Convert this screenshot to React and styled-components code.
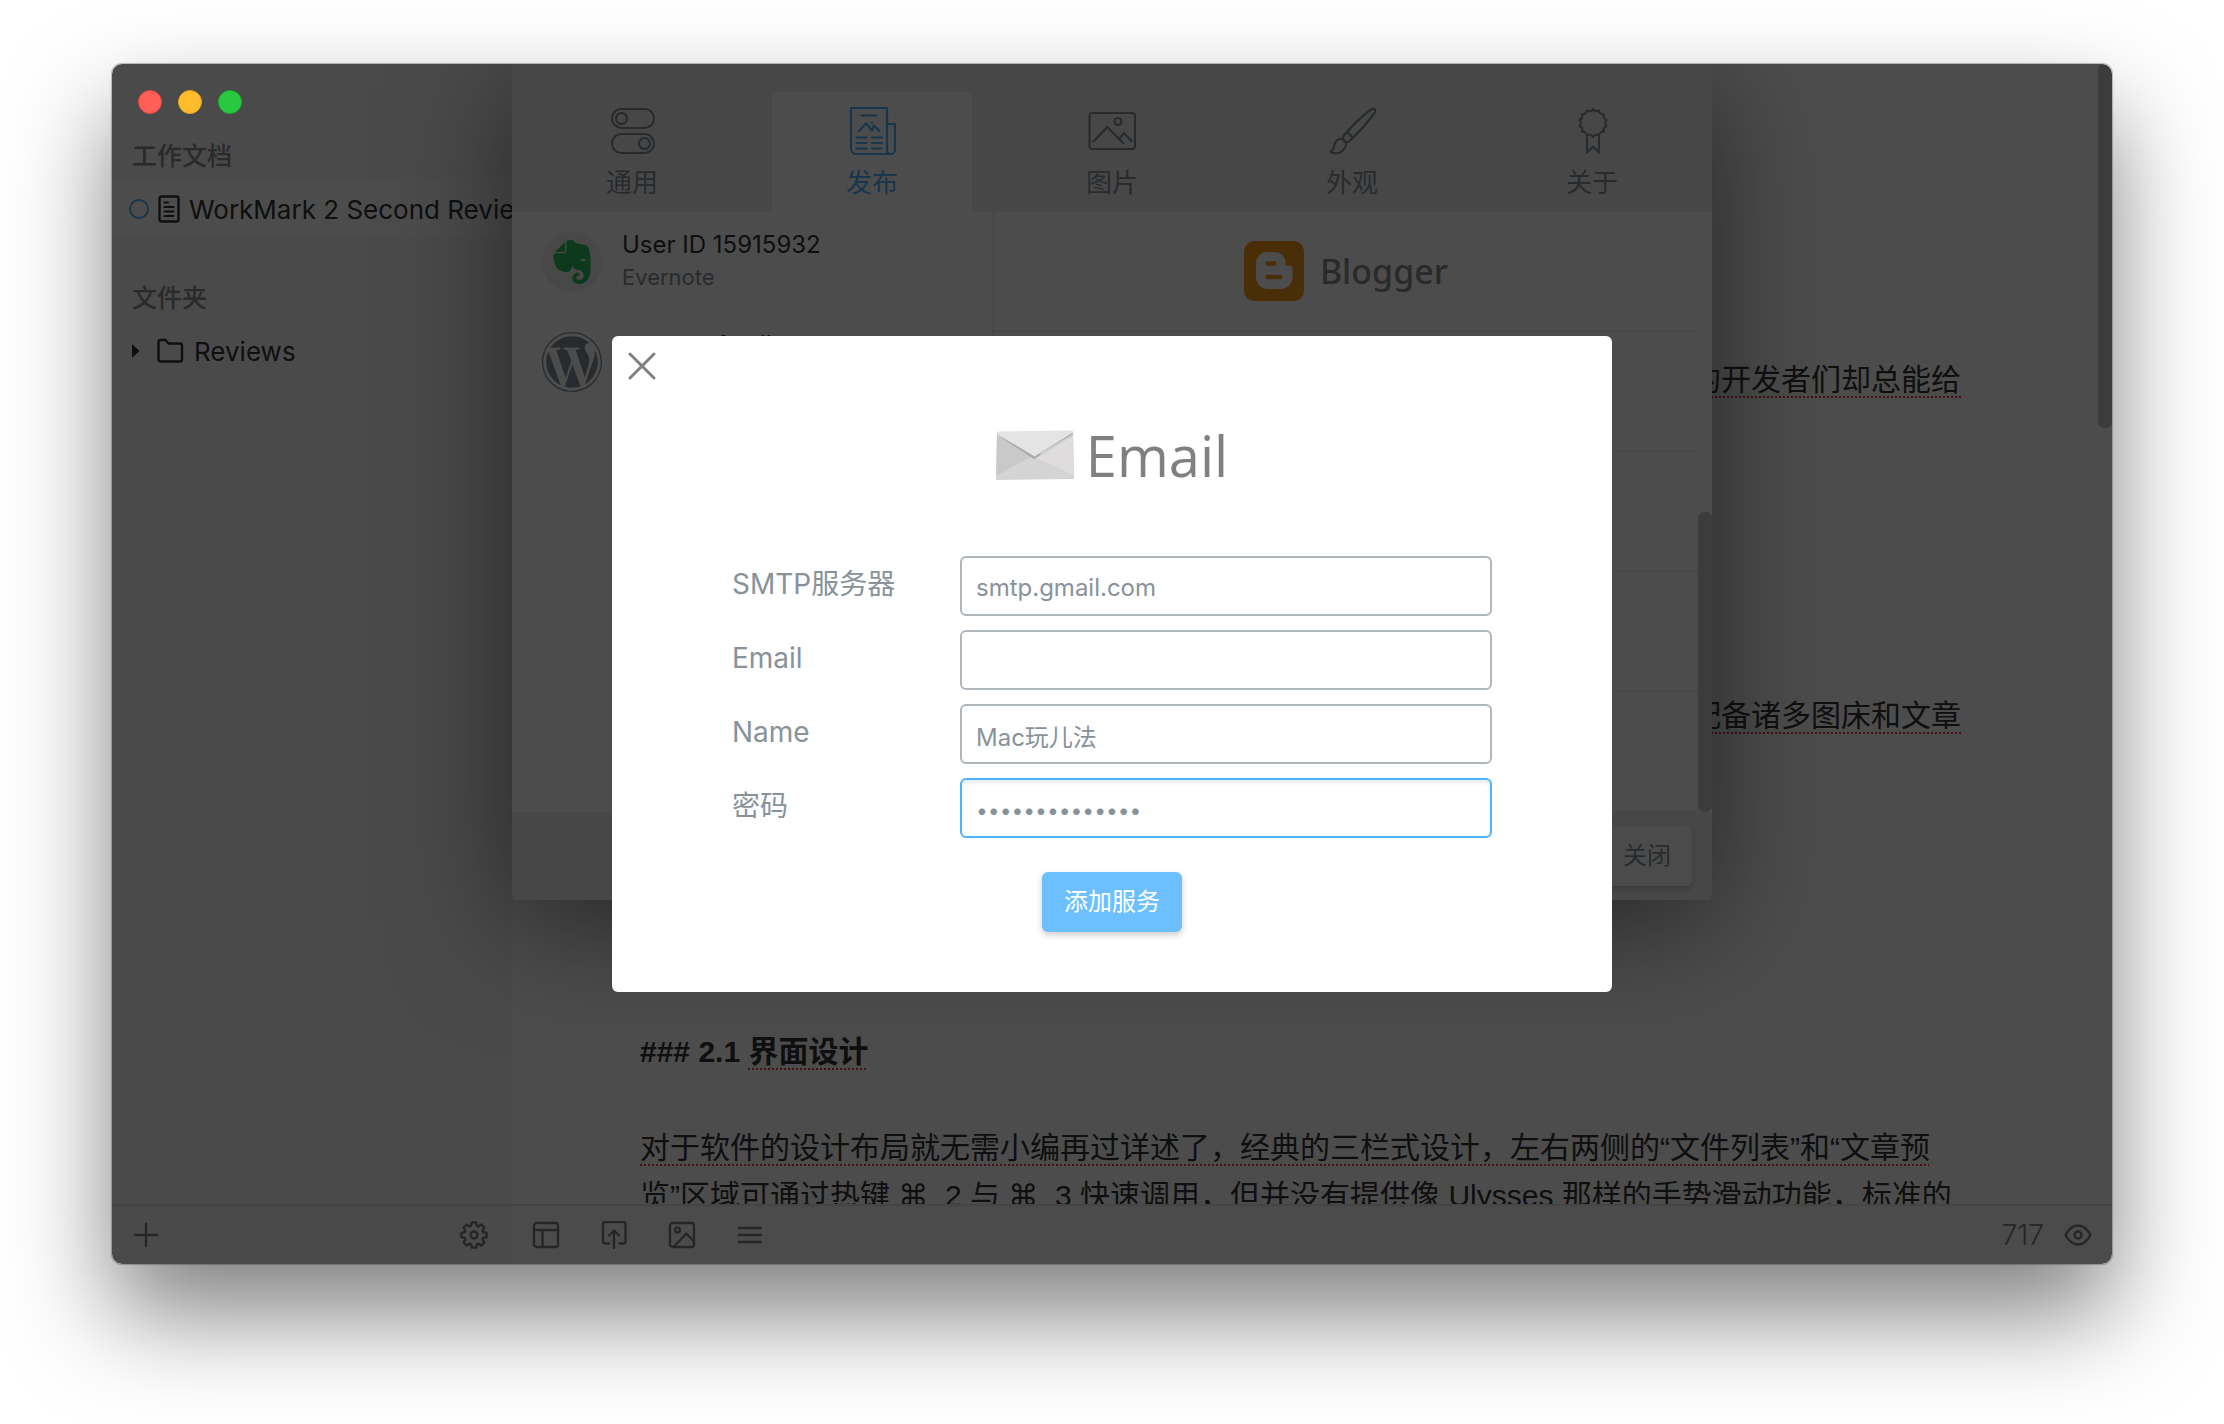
import React from "react";
import styled, { createGlobalStyle, css } from "styled-components";
import { SiEvernote } from "react-icons/si";
import { FaWordpress } from "react-icons/fa";

const sans = `Inter, "Noto Sans CJK SC", sans-serif`;
const prose = `"Liberation Sans", "Noto Sans CJK SC", "DejaVu Sans", sans-serif`;
const brand = `"Open Sans", "Noto Sans", sans-serif`;

const GlobalStyle = createGlobalStyle`
  *, *::before, *::after { box-sizing: border-box; }
  body { margin: 0; background: #fff; font-family: ${sans}; color: #333; }
  button, input { font: inherit; margin: 0; }
  h1, h2, h3, p, ul { margin: 0; padding: 0; }
  ul { list-style: none; }
  svg { display: block; flex: none; }
`;

const Desktop = styled.div`
  display: flex;
  min-height: 100vh;
  padding: 64px 112px 160px;
`;

const Window = styled.div`
  position: relative;
  flex: 1;
  display: grid;
  grid-template-columns: 400px minmax(0, 1fr);
  grid-template-rows: minmax(0, 1fr) 60px;
  border-radius: 10px;
  overflow: hidden;
  background: #fff;
`;

const WindowFrame = styled.div`
  flex: 1;
  display: flex;
  border-radius: 10px;
  box-shadow: 0 0 1px 1px rgba(0, 0, 0, 0.25), 0 50px 100px rgba(0, 0, 0, 0.5);
`;

const TrafficLights = styled.div`
  position: absolute;
  top: 26px;
  left: 26px;
  z-index: 4;
  display: flex;
  gap: 16px;
`;

const Light = styled.button`
  width: 24px;
  height: 24px;
  padding: 0;
  border: 1px solid ${(p) => p.$rim};
  border-radius: 50%;
  background: ${(p) => p.$fill};
`;

/* ---------- sidebar ---------- */

const Sidebar = styled.aside`
  display: flex;
  flex-direction: column;
  gap: 38px;
  padding-top: 70px;
  background: #f7f7f7;
`;

const SideHeading = styled.h2`
  padding-left: 20px;
  font-size: 25px;
  font-weight: 500;
  line-height: 44px;
  color: #8c8c8c;
`;

const SideRow = styled.div`
  display: flex;
  align-items: center;
  gap: ${(p) => p.$gap}px;
  height: 60px;
  padding: 2px 0 0 ${(p) => p.$indent}px;
  overflow: hidden;
  white-space: nowrap;
  font-size: 26px;
  color: #333;
  background: ${(p) => (p.$selected ? "#fdfdfd" : "transparent")};
`;

/* ---------- editor ---------- */

const Editor = styled.main`
  display: grid;
  grid-template-columns: minmax(0, 1fr) 14px;
  overflow: hidden;
`;

const Manuscript = styled.article`
  display: flex;
  flex-direction: column;
  gap: 288px;
  height: 0;
  padding: 292px 137px 0 128px;
  font-family: ${prose};
  font-size: 30px;
  line-height: 48px;
  white-space: nowrap;
`;

const Tail = styled.p`
  text-align: right;
`;

const Section = styled.section`
  display: flex;
  flex-direction: column;
  gap: 48px;
`;

const SectionTitle = styled.h3`
  font-size: 30px;
  font-weight: 700;
`;

const Line = styled.span`
  display: block;
`;

const Key = styled.kbd`
  font-family: "DejaVu Sans", sans-serif;
  font-size: 30px;
  line-height: 1;
`;

const Misspelt = styled.span`
  text-decoration: underline dotted #e03a3a 2px;
  text-underline-offset: 6px;
  text-decoration-skip-ink: none;
`;

const Thumb = styled.div`
  width: 14px;
  height: ${(p) => p.$length}px;
  border-radius: 6px;
  background: #c8c8c8;
`;

/* ---------- status bars ---------- */

const Bar = styled.footer`
  display: flex;
  align-items: center;
  justify-content: space-between;
  padding: 0 ${(p) => p.$end}px 0 20px;
  border-top: 2px solid #e6e6e6;
  background: ${(p) => p.$tone};
  color: #808080;
  font-size: 28px;
  font-weight: 300;
`;

const BarGroup = styled.div`
  display: flex;
  align-items: center;
  gap: ${(p) => p.$gap}px;
`;

const IconButton = styled.button`
  display: flex;
  padding: 0;
  border: 0;
  background: none;
  color: inherit;
`;

/* ---------- preferences sheet ---------- */

const SheetLayer = styled.div`
  position: absolute;
  inset: 0;
  z-index: 1;
  display: flex;
  justify-content: center;
  align-items: flex-start;
`;

const Sheet = styled.section`
  width: 1200px;
  border-radius: 0 0 6px 6px;
  background: #fff;
  box-shadow: 0 24px 120px rgba(20, 28, 36, 0.55);
`;

const TabBar = styled.nav`
  display: flex;
  justify-content: space-around;
  padding-top: 28px;
  background: #efefef;
`;

const Tab = styled.button`
  display: flex;
  flex-direction: column;
  align-items: center;
  gap: 10px;
  width: 200px;
  height: 120px;
  padding: 15px 0 0;
  border: 0;
  border-radius: 6px 6px 0 0;
  font-size: 26px;
  line-height: 36px;
  color: #87929b;
  background: transparent;
  ${(p) =>
    p.$active &&
    css`
      color: #4db3ff;
      background: #fff;
    `}
`;

const SheetBody = styled.div`
  display: grid;
  grid-template-columns: 480px minmax(0, 1fr) 14px;
  height: 600px;
`;

const AccountRow = styled.li`
  display: flex;
  align-items: center;
  gap: 20px;
  height: 100px;
  padding: 0 30px;
`;

const Avatar = styled.span`
  display: flex;
  align-items: center;
  justify-content: center;
  width: 60px;
  height: 60px;
  border-radius: 50%;
  background: ${(p) => p.$fill};
  color: ${(p) => p.$ink};
`;

const AccountText = styled.div`
  display: flex;
  flex-direction: column;
  padding-bottom: 3px;
  line-height: 33px;
`;

const AccountName = styled.span`
  font-size: 24px;
  color: #333;
`;

const AccountKind = styled.span`
  font-size: 22px;
  color: #87929b;
`;

const ServiceList = styled.ul`
  border-left: 2px solid #f2f2f2;
`;

const Service = styled.li`
  display: flex;
  align-items: center;
  justify-content: center;
  gap: 16px;
  height: 120px;
  border-bottom: 2px solid #f0f0f0;
  font-family: "Noto Sans", "Open Sans", sans-serif;
  font-size: 34px;
  font-weight: 500;
  color: #8c8c8c;
`;

const ScrollTrack = styled.div`
  display: flex;
  align-items: flex-end;
`;

const SheetFooter = styled.footer`
  display: flex;
  justify-content: flex-end;
  padding: 14px 20px;
  border-radius: 0 0 6px 6px;
  background: #efefef;
`;

const Button = styled.button`
  min-width: ${(p) => (p.$primary ? 140 : 90)}px;
  height: 60px;
  padding: 0 0 5px;
  border: 0;
  border-radius: 6px;
  font-size: 24px;
  color: ${(p) => (p.$primary ? "#fff" : "#87929b")};
  background: ${(p) => (p.$primary ? "#6cc0ff" : "#fcfcfc")};
  box-shadow: 0 3px 6px rgba(0, 0, 0, 0.2);
`;

/* ---------- modal ---------- */

const Backdrop = styled.div`
  position: absolute;
  inset: 0;
  z-index: 3;
  display: flex;
  align-items: center;
  justify-content: center;
  background: rgba(0, 0, 0, 0.7);
`;

const Modal = styled.form`
  display: flex;
  flex-direction: column;
  align-items: center;
  width: 1000px;
  padding: 15px 15px 60px;
  border-radius: 6px;
  background: #fff;
`;

const CloseButton = styled(IconButton)`
  align-self: flex-start;
  color: #808080;
`;

const ModalTitle = styled.h1`
  display: flex;
  align-items: center;
  gap: 12px;
  margin: 31px 0 58px;
  font-family: ${brand};
  font-size: 56px;
  font-weight: 400;
  line-height: 86px;
  color: #808080;
`;

const Fields = styled.div`
  display: flex;
  flex-direction: column;
  gap: 14px;
  width: 760px;
  margin-bottom: 34px;
`;

const Field = styled.div`
  display: grid;
  grid-template-columns: 228px minmax(0, 1fr);
  align-items: center;
`;

const FieldLabel = styled.label`
  font-size: 28px;
  line-height: 56px;
  padding-bottom: 4px;
  color: #87929b;
`;

const TextBox = styled.input`
  width: 100%;
  height: 60px;
  padding: 2px 14px 0;
  border: 2px solid ${(p) => (p.$active ? "#4db3ff" : "#afb6bc")};
  border-radius: 6px;
  outline: 0;
  font-size: 24px;
  color: #87929b;
  background: #fff;
  box-shadow: ${(p) => (p.$active ? "inset 0 3px 4px rgba(0, 0, 0, 0.08)" : "none")};

  &[type="password"] {
    padding-top: 4px;
    font-size: 21px;
  }
`;

/* ---------- drawings ---------- */

const Glyph = ({ size = 28, stroke = 2.4, box = 28, children }) => (
  <svg
    width={size}
    height={size}
    viewBox={`0 0 ${box} ${box}`}
    fill="none"
    stroke="currentColor"
    strokeWidth={stroke}
    strokeLinecap="round"
    strokeLinejoin="round"
    aria-hidden="true"
  >
    {children}
  </svg>
);

const TabGlyph = ({ children }) => (
  <Glyph size={48} box={48} stroke={2.2}>
    {children}
  </Glyph>
);

const TogglesIcon = () => (
  <TabGlyph>
    <rect x="4" y="2" width="42" height="19" rx="9.5" />
    <circle cx="13.5" cy="11.5" r="5.5" />
    <rect x="4" y="27" width="42" height="19" rx="9.5" />
    <circle cx="36.5" cy="36.5" r="5.5" />
  </TabGlyph>
);

const NewsIcon = () => (
  <TabGlyph>
    <path d="M39 1H3v41a5 5 0 0 0 5 5h35a4 4 0 0 0 4-4V17h-8zM39 17v26a4 4 0 0 0 4 4" />
    <path d="M13.5 8.5h15M8.5 30.5h10M24 30.5h10M8.5 36h10M24 36h10M8.5 41.5h10M24 41.5h10" />
    <path d="M11 24l7-7.500 6.500 7M21 20l3 3.500 2-5 5.500 5.500M24 15v.8" />
  </TabGlyph>
);

const PictureIcon = () => (
  <TabGlyph>
    <rect x="1.500" y="6" width="45.500" height="36" rx="3" />
    <circle cx="30" cy="14.500" r="3.500" />
    <path d="M5.500 34.500l14-14.500 16 16.500M31.500 31.500l4.500-5.500 7.500 8" />
  </TabGlyph>
);

const BrushIcon = () => (
  <TabGlyph>
    <path d="M16 28.500C23 20 34 9 43 2.500c3-2 5.500.5 3.500 3.500C40 15 30 26 22 33.500" />
    <path d="M16 28.500c-2 2.500-1 5 1 6.500 2 .5 4 .5 5-1.500M19.500 25l5.500 6" />
    <path d="M15 32c-5-1-7.500 2-8.500 6-.7 3.500-1.500 5.500-4 7 6 2.500 11.500 1 14.500-4.500 1.500-3 1-5.500 0-6.500z" />
  </TabGlyph>
);

const scallops = Array.from({ length: 14 }, (_, i) => {
  const a = ((i + 1) * 2 * Math.PI) / 14 - Math.PI / 2;
  return `A4 4 0 0 0 ${(25 + 14 * Math.cos(a)).toFixed(2)} ${(16 + 14 * Math.sin(a)).toFixed(2)}`;
}).join(" ");

const BadgeIcon = () => (
  <TabGlyph>
    <path d={`M25 2 ${scallops}Z`} />
    <path d="M19 30v15.500l6-6 6 6V30" />
  </TabGlyph>
);

const DocIcon = () => (
  <Glyph>
    <rect x="4.500" y="1.500" width="19" height="25" rx="2" />
    <path d="M9.500 7.500h3.500M9.500 12h9M9.500 16.500h9M9.500 21h9" strokeWidth="2" />
  </Glyph>
);

const FolderIcon = () => (
  <Glyph>
    <path d="M2.500 5a2 2 0 0 1 2-2h5l3 3.500H24a2 2 0 0 1 2 2V22.500a2 2 0 0 1-2 2H4.500a2 2 0 0 1-2-2z" />
  </Glyph>
);

const Disclosure = () => (
  <svg width="14" height="14" viewBox="0 0 14 14" fill="currentColor" aria-hidden="true">
    <path d="M0 0l7.500 7L0 14z" />
  </svg>
);

const Ring = () => (
  <svg width="20" height="20" viewBox="0 0 20 20" fill="none" stroke="#4db3ff" strokeWidth="2" aria-hidden="true">
    <circle cx="10" cy="10" r="9" />
  </svg>
);

const PlusIcon = () => (
  <Glyph>
    <path d="M14 3v22M3 14h22" />
  </Glyph>
);

const gearPath = (() => {
  const pts = [];
  for (let i = 0; i < 8; i++) {
    const c = (i * Math.PI) / 4;
    [[-0.32, 9.6], [-0.17, 12.8], [0.17, 12.8], [0.32, 9.6]].forEach(([d, r]) =>
      pts.push(`${(14 + r * Math.sin(c + d)).toFixed(2)} ${(14 - r * Math.cos(c + d)).toFixed(2)}`)
    );
  }
  return `M${pts.join("L")}Z`;
})();

const GearIcon = () => (
  <Glyph>
    <path d={gearPath} />
    <circle cx="14" cy="14" r="3.500" />
  </Glyph>
);

const LayoutIcon = () => (
  <Glyph>
    <rect x="2" y="2" width="24" height="24" rx="2.500" />
    <path d="M2 9h24M10.500 9v17" />
  </Glyph>
);

const ShareIcon = () => (
  <Glyph>
    <path d="M9 22.500H5a2 2 0 0 1-2-2V3a2 2 0 0 1 2-2h18.500a2 2 0 0 1 2 2v17.500a2 2 0 0 1-2 2h-4M14 27V10M9 14.500l5-5 5 5" />
  </Glyph>
);

const ImageIcon = () => (
  <Glyph>
    <rect x="2" y="2" width="24" height="24" rx="2.500" />
    <circle cx="9.500" cy="9" r="2.500" />
    <path d="M6 25.500l12.500-13 7 7.500" />
  </Glyph>
);

const MenuIcon = () => (
  <Glyph>
    <path d="M3 7h22M3 14h22M3 21h22" />
  </Glyph>
);

const EyeIcon = () => (
  <Glyph>
    <path d="M1.500 14C5 7.500 9.500 4.500 14 4.500S23 7.500 26.500 14C23 20.500 18.500 23.500 14 23.500S5 20.500 1.500 14z" />
    <circle cx="14" cy="14" r="3.500" />
  </Glyph>
);

const CrossIcon = () => (
  <Glyph size={30} box={30} stroke={3}>
    <path d="M3 3l24 24M27 3L3 27" />
  </Glyph>
);

const BloggerMark = () => (
  <svg width="60" height="60" viewBox="0 0 60 60" aria-hidden="true">
    <rect width="60" height="60" rx="10" fill="#f99b1d" />
    <path
      d="M24 11h6c7 0 11.500 5 11.500 11 0 2 1 3 3 3h1.500c2 0 2.500 1 2.500 2.500V36c0 7-5 12-12 12H24c-7 0-12-5-12-12V23c0-7 5-12 12-12z"
      fill="#fff"
    />
    <path d="M23.500 22.500h7M23.500 36h13" stroke="#f99b1d" strokeWidth="4.500" strokeLinecap="round" />
  </svg>
);

const Envelope = () => (
  <svg width="78" height="50" viewBox="0 0 78 50" aria-hidden="true">
    <path d="M1 2L77 1l1 48-78 1z" fill="#d4d4d4" />
    <path d="M1 5l36 21L0 46z" fill="#c9c9c9" />
    <path d="M77 4L38 27l40 18z" fill="#dfdcdd" />
    <path d="M1 5l37 24L77 5V2L38 25z" fill="#a8a8a8" />
    <path d="M45 22.500L77 4v2L44 26z" fill="#cfcfcf" />
    <path d="M1 3.500C1 2 2 1.500 3 1.500L75 .500c1.500 0 2 .5 2 2L38.500 26.500z" fill="#e4e4e4" />
  </svg>
);

/* ---------- data ---------- */

const tabs = [
  { name: "通用", Icon: TogglesIcon },
  { name: "发布", Icon: NewsIcon, active: true },
  { name: "图片", Icon: PictureIcon },
  { name: "外观", Icon: BrushIcon },
  { name: "关于", Icon: BadgeIcon },
];

const fields = [
  { id: "smtp", label: "SMTP服务器", value: "smtp.gmail.com" },
  { id: "email", label: "Email", value: "" },
  { id: "name", label: "Name", value: "Mac玩儿法" },
  { id: "password", label: "密码", value: "abcdefghijklmn", type: "password", active: true },
];

export default function App() {
  return (
    <Desktop>
      <GlobalStyle />
      <WindowFrame>
        <Window>
          <TrafficLights>
            <Light type="button" aria-label="Close" $fill="#ff5f57" $rim="#e2463f" />
            <Light type="button" aria-label="Minimise" $fill="#ffbd2e" $rim="#e0a123" />
            <Light type="button" aria-label="Zoom" $fill="#28c940" $rim="#1dad2b" />
          </TrafficLights>

          <Sidebar>
            <section>
              <SideHeading>工作文档</SideHeading>
              <SideRow $selected $indent={17} $gap={6}>
                <Ring />
                <DocIcon />
                <span>WorkMark 2 Second Review</span>
              </SideRow>
            </section>
            <section>
              <SideHeading>文件夹</SideHeading>
              <SideRow $indent={20} $gap={10}>
                <Disclosure />
                <FolderIcon />
                <span>Reviews</span>
              </SideRow>
            </section>
          </Sidebar>

          <Editor>
            <Manuscript>
              <Tail>
                <Misspelt>的开发者们却总能给</Misspelt>
              </Tail>
              <Tail>
                <Misspelt>配备诸多图床和文章</Misspelt>
              </Tail>
              <Section>
                <SectionTitle>
                  ### 2.1 <Misspelt>界面设计</Misspelt>
                </SectionTitle>
                <p>
                  <Line>
                    <Misspelt>对于软件的设计布局就无需小编再过详述了，经典的三栏式设计，左右两侧的“文件列表”和“文章预</Misspelt>
                  </Line>
                  <Line>
                    览”区域可通过热键 <Key>⌘</Key>&nbsp; 2 与 <Key>⌘</Key>&nbsp; 3 快速调用，但并没有提供像 Ulysses 那样的手势滑动功能，标准的
                  </Line>
                </p>
              </Section>
            </Manuscript>
            <Thumb $length={364} />
          </Editor>

          <Bar $tone="#f7f7f7" $end={24}>
            <IconButton type="button" aria-label="Add">
              <PlusIcon />
            </IconButton>
            <IconButton type="button" aria-label="Settings">
              <GearIcon />
            </IconButton>
          </Bar>
          <Bar $tone="#fcfcfc" $end={20}>
            <BarGroup $gap={40}>
              <IconButton type="button" aria-label="Layout">
                <LayoutIcon />
              </IconButton>
              <IconButton type="button" aria-label="Publish">
                <ShareIcon />
              </IconButton>
              <IconButton type="button" aria-label="Image">
                <ImageIcon />
              </IconButton>
              <IconButton type="button" aria-label="Outline">
                <MenuIcon />
              </IconButton>
            </BarGroup>
            <BarGroup $gap={20}>
              <span>717</span>
              <IconButton type="button" aria-label="Preview">
                <EyeIcon />
              </IconButton>
            </BarGroup>
          </Bar>

          <SheetLayer>
            <Sheet>
              <TabBar>
                {tabs.map(({ name, Icon, active }) => (
                  <Tab key={name} type="button" $active={active}>
                    <Icon />
                    {name}
                  </Tab>
                ))}
              </TabBar>
              <SheetBody>
                <ul>
                  <AccountRow>
                    <Avatar $fill="#f0f0f0" $ink="#2dbe60">
                      <SiEvernote size={44} />
                    </Avatar>
                    <AccountText>
                      <AccountName>User ID 15915932</AccountName>
                      <AccountKind>Evernote</AccountKind>
                    </AccountText>
                  </AccountRow>
                  <AccountRow>
                    <Avatar $fill="transparent" $ink="#87929b">
                      <FaWordpress size={62} />
                    </Avatar>
                    <AccountText>
                      <AccountName>my new family</AccountName>
                      <AccountKind>WordPress</AccountKind>
                    </AccountText>
                  </AccountRow>
                </ul>
                <ServiceList>
                  <Service>
                    <BloggerMark />
                    Blogger
                  </Service>
                  <Service />
                  <Service />
                  <Service />
                  <Service />
                </ServiceList>
                <ScrollTrack>
                  <Thumb $length={300} />
                </ScrollTrack>
              </SheetBody>
              <SheetFooter>
                <Button type="button">关闭</Button>
              </SheetFooter>
            </Sheet>
          </SheetLayer>

          <Backdrop>
            <Modal onSubmit={(e) => e.preventDefault()}>
              <CloseButton type="button" aria-label="Close dialog">
                <CrossIcon />
              </CloseButton>
              <ModalTitle>
                <Envelope />
                Email
              </ModalTitle>
              <Fields>
                {fields.map(({ id, label, value, type = "text", active }) => (
                  <Field key={id}>
                    <FieldLabel htmlFor={id}>{label}</FieldLabel>
                    <TextBox id={id} type={type} defaultValue={value} $active={active} />
                  </Field>
                ))}
              </Fields>
              <Button type="submit" $primary>
                添加服务
              </Button>
            </Modal>
          </Backdrop>
        </Window>
      </WindowFrame>
    </Desktop>
  );
}
